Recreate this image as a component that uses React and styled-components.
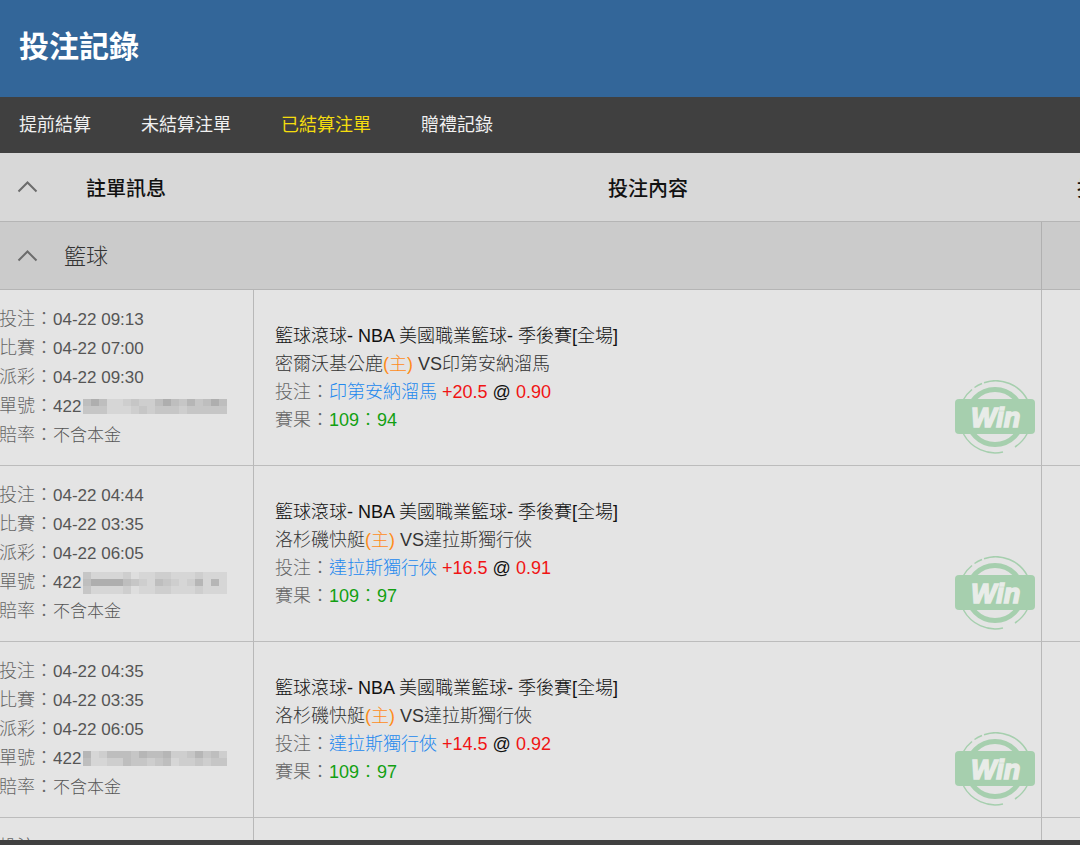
import styled, { createGlobalStyle } from 'styled-components';

const GlobalStyle = createGlobalStyle`
	* {
		box-sizing: border-box;
	}

	body {
		margin: 0;
		background: #e4e4e4;
		font-family: 'Liberation Sans', 'Noto Sans CJK TC', sans-serif;
	}
`;

const Page = styled.div`
	display: flex;
	flex-direction: column;
	height: 100vh;
	overflow: hidden;
`;

const Header = styled.header`
	flex: none;
	display: flex;
	align-items: center;
	height: 97px;
	padding: 0 20px 4px 19px;
	background: #336699;
	color: #fff;

	h1 {
		margin: 0;
		font-size: 30px;
		line-height: 40px;
		font-weight: bold;
	}
`;

const Nav = styled.nav`
	flex: none;
	display: flex;
	align-items: center;
	gap: 50px;
	height: 56px;
	padding: 0 19px;
	background: #404040;
`;

const NavLink = styled.a`
	color: ${({ $active }) => ($active ? '#f4dd0e' : '#f0f0f0')};
	font-size: 18px;
	line-height: 28px;
	text-decoration: none;
	white-space: nowrap;
`;

const Content = styled.main`
	flex: 1;
	min-height: 0;
	overflow: hidden;
`;

const Table = styled.table`
	width: calc(100% + 112px);
	border-collapse: separate;
	border-spacing: 0;
	table-layout: fixed;

	th,
	td {
		padding: 0;
	}
`;

const InfoCol = styled.col`
	width: 254px;
`;

const AmountCol = styled.col`
	width: 150px;
`;

const HeadCell = styled.th`
	height: 69px;
	border-bottom: 1px solid #b5b5b5;
	background: #d8d8d8;
	color: #111;
	font-size: 20px;
	line-height: 28px;
	font-weight: 500;
	text-align: center;
`;

const HeadText = styled.span`
	display: inline-block;
	padding-top: 4px;
`;

const GroupCell = styled.td`
	height: 68px;
	border-right: 1px solid #b0b0b0;
	border-bottom: 1px solid #b5b5b5;
	background: #cbcbcb;
	color: #444;
	font-size: 22px;
	line-height: 28px;
`;

const GroupText = styled.span`
	padding-top: 2px;
	color: #333;
	font-weight: 300;
`;

const ToggleRow = styled.div`
	display: flex;
	align-items: center;
	gap: ${({ $gap }) => $gap}px;
	padding-left: 17px;
`;

const ToggleButton = styled.button`
	display: flex;
	padding: 0;
	border: 0;
	background: none;
	color: #6c6c6c;
	cursor: pointer;
`;

const BetCell = styled.td`
	height: 176px;
	border-right: 1px solid #b8b8b8;
	border-bottom: 1px solid #bcbcbc;
	background: #e4e4e4;
`;

const InfoLine = styled.div`
	display: flex;
	align-items: center;
	height: 29px;
	color: #555;
	font-size: 17px;
	line-height: 29px;
	white-space: nowrap;

	svg {
		margin-left: 2px;
	}
`;

const InfoLabel = styled.span`
	display: flex;
	flex: none;
	justify-content: flex-end;
	width: 53px;
	overflow: hidden;
	color: #666;
	font-size: 18px;
	font-weight: 300;
`;

const LightText = styled.span`
	color: #555;
	font-weight: 300;
`;

const BetBody = styled.div`
	display: flex;
	align-items: flex-end;
	justify-content: space-between;
	height: 175px;
	padding: 0 6px 11px 21px;
`;

const BetText = styled.div`
	align-self: center;
	padding-top: 11px;
	color: #333;
	font-size: 18px;
	line-height: 28px;
	font-weight: 300;
	white-space: nowrap;
`;

const Tint = styled.span`
	color: ${({ $color }) => $color};
`;

const BottomBar = styled.footer`
	flex: none;
	height: 5px;
	background: #404040;
`;

const Chevron = () => (
	<svg width="21" height="14" viewBox="0 0 21 14" fill="none" aria-hidden="true">
		<path d="M1.5 11.5 10.5 2.5l9 9" stroke="currentColor" strokeWidth="2" />
	</svg>
);

const WinBadge = () => (
	<svg width="80" height="74" viewBox="0 0 80 74" role="img" aria-label="Win">
		<g fill="none" stroke="#a6cfae">
			<circle cx="40" cy="37" r="27.5" strokeWidth="5" />
			<path
				d="M8.5 19.5A36 36 0 0 1 17 9.5M19.5 7.5A36 36 0 0 1 27 3.5M29 2.7A36 36 0 0 1 73 21M8.5 54A36 36 0 0 0 48 72M60 67A36 36 0 0 0 72 54"
				strokeWidth="1.5"
			/>
		</g>
		<rect y="19" width="80" height="35" rx="4" fill="#a6cfae" />
		<text
			x="16"
			y="47"
			fill="#e8ece8"
			stroke="#e8ece8"
			strokeWidth="1.6"
			fontSize="27"
			fontWeight="bold"
			fontStyle="italic"
		>
			Win
		</text>
	</svg>
);

const Mosaic = ({ shades }) => (
	<svg width="144" height={shades.length * 7 + 1} aria-hidden="true">
		{shades.map((line, y) =>
			[...line].map((shade, x) => {
				const level = 222 - Number(shade) * 8;
				return (
					<rect
						key={`${x}-${y}`}
						x={x * 8}
						y={y * 7}
						width="8"
						height="8"
						fill={`rgb(${level}, ${level}, ${level})`}
					/>
				);
			})
		)}
	</svg>
);

const bets = [
	{
		betTime: '04-22 09:13',
		matchTime: '04-22 07:00',
		payTime: '04-22 09:30',
		shades: ['464112322464353464', '333111232333233333'],
		home: '密爾沃基公鹿',
		away: '印第安納溜馬',
		pick: '印第安納溜馬',
		line: '+20.5',
		odds: '0.90',
		score: '109：94',
	},
	{
		betTime: '04-22 04:44',
		matchTime: '04-22 03:35',
		payTime: '04-22 06:05',
		shades: ['311112011221112111', '466664321432125151', '311112011221112111'],
		home: '洛杉磯快艇',
		away: '達拉斯獨行俠',
		pick: '達拉斯獨行俠',
		line: '+16.5',
		odds: '0.91',
		score: '109：97',
	},
	{
		betTime: '04-22 04:35',
		matchTime: '04-22 03:35',
		payTime: '04-22 06:05',
		shades: ['512444354452235342', '411224332341223233'],
		home: '洛杉磯快艇',
		away: '達拉斯獨行俠',
		pick: '達拉斯獨行俠',
		line: '+14.5',
		odds: '0.92',
		score: '109：97',
	},
];

// the list goes on below the fold
const rows = [...bets, bets[2]];

const BetRow = ({ bet }) => (
	<tr>
		<BetCell>
			<InfoLine>
				<InfoLabel>投注：</InfoLabel>
				{bet.betTime}
			</InfoLine>
			<InfoLine>
				<InfoLabel>比賽：</InfoLabel>
				{bet.matchTime}
			</InfoLine>
			<InfoLine>
				<InfoLabel>派彩：</InfoLabel>
				{bet.payTime}
			</InfoLine>
			<InfoLine>
				<InfoLabel>單號：</InfoLabel>
				422
				<Mosaic shades={bet.shades} />
			</InfoLine>
			<InfoLine>
				<InfoLabel>賠率：</InfoLabel>
				<LightText>不含本金</LightText>
			</InfoLine>
		</BetCell>
		<BetCell>
			<BetBody>
				<BetText>
					<div>
						<Tint $color="#111">籃球滾球- NBA 美國職業籃球- 季後賽[全場]</Tint>
					</div>
					<div>
						{bet.home}
						<Tint $color="#ff8c1a">(主)</Tint> VS{bet.away}
					</div>
					<div>
						<Tint $color="#666">投注：</Tint>
						<Tint $color="#2288ee">{bet.pick}</Tint> <Tint $color="#f01414">{bet.line}</Tint>{' '}
						<Tint $color="#111">@</Tint> <Tint $color="#f01414">{bet.odds}</Tint>
					</div>
					<div>
						<Tint $color="#666">賽果：</Tint>
						<Tint $color="#12a012">{bet.score}</Tint>
					</div>
				</BetText>
				<WinBadge />
			</BetBody>
		</BetCell>
		<BetCell />
	</tr>
);

const App = () => {
	return (
		<Page>
			<GlobalStyle />
			<Header>
				<h1>投注記錄</h1>
			</Header>
			<Nav>
				<NavLink href="#early">提前結算</NavLink>
				<NavLink href="#open">未結算注單</NavLink>
				<NavLink href="#settled" $active>
					已結算注單
				</NavLink>
				<NavLink href="#gifts">贈禮記錄</NavLink>
			</Nav>
			<Content>
				<Table>
					<colgroup>
						<InfoCol />
						<col />
						<AmountCol />
					</colgroup>
					<thead>
						<tr>
							<HeadCell>
								<ToggleRow $gap={48}>
									<ToggleButton type="button" aria-label="全部收合">
										<Chevron />
									</ToggleButton>
									<HeadText>註單訊息</HeadText>
								</ToggleRow>
							</HeadCell>
							<HeadCell>
								<HeadText>投注內容</HeadText>
							</HeadCell>
							<HeadCell>
								<HeadText>投注金額</HeadText>
							</HeadCell>
						</tr>
					</thead>
					<tbody>
						<tr>
							<GroupCell colSpan={2}>
								<ToggleRow $gap={26}>
									<ToggleButton type="button" aria-label="收合籃球">
										<Chevron />
									</ToggleButton>
									<GroupText>籃球</GroupText>
								</ToggleRow>
							</GroupCell>
							<GroupCell />
						</tr>
						{rows.map((bet, i) => (
							<BetRow key={i} bet={bet} />
						))}
					</tbody>
				</Table>
			</Content>
			<BottomBar />
		</Page>
	);
};

export default App;
